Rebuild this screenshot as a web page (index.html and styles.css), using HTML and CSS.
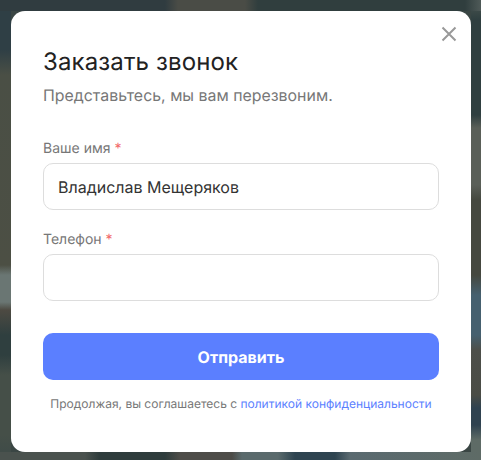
FILE: index.html
```html
<!DOCTYPE html>
<html lang="ru">
<head>
<meta charset="utf-8">
<title>Заказать звонок</title>
<link rel="stylesheet" href="styles.css">
</head>
<body>
<div class="overlay">
  <form class="modal">
    <button type="button" class="close" aria-label="Закрыть">
      <svg width="16" height="16" viewBox="0 0 16 16"><path d="M1.5 1.5L14.5 14.5M14.5 1.5L1.5 14.5" stroke="#999" stroke-width="2" fill="none"/></svg>
    </button>
    <h2 class="title">Заказать звонок</h2>
    <p class="subtitle">Представьтесь, мы вам перезвоним.</p>
    <label class="field">
      <span class="label">Ваше имя <span class="req">*</span></span>
      <input class="input" type="text" value="Владислав Мещеряков">
    </label>
    <label class="field">
      <span class="label">Телефон <span class="req">*</span></span>
      <input class="input" type="tel">
    </label>
    <button type="button" class="submit">Отправить</button>
    <p class="note">Продолжая, вы соглашаетесь с <a href="#">политикой конфиденциальности</a></p>
  </form>
</div>
</body>
</html>
```
FILE: styles.css
```css
* { box-sizing: border-box; }
html, body { margin: 0; height: 100%; }
body { font-family: Inter, "Liberation Sans", sans-serif; text-rendering: geometricPrecision; }
.overlay {
  height: 460px;
  padding: 11px 10px 8px 11px;
  background:
    linear-gradient(90deg, #303c40 0, #303c40 165px, #4a4c46 178px, #4a4c46 245px, #303e3e 258px, #303e3e 465px, #4f5a58 481px) top left / 100% 11px no-repeat,
    linear-gradient(90deg, #4a524e 0, #4a524e 85px, #2e3c3c 100px, #2e3c3c 165px, #4d4c48 180px, #4d4c48 232px, #5a6a6c 242px, #5a6a6c 278px, #2e4450 295px, #2e4450 335px, #5a6a70 350px, #5e6b66 481px) bottom left / 100% 8px no-repeat,
    linear-gradient(180deg, #2f3f45 0, #2f3f45 50px, #4a4f45 75px, #4c4f44 265px, #6a7673 275px, #6a7673 302px, #4d4a42 310px, #2f3f3f 335px, #2f3f3f 355px, #454f48 375px, #454f48 435px, #3d4a48 460px) left / 11px 100% no-repeat,
    linear-gradient(180deg, #4a5550 0, #2f3f40 20px, #2f3f40 115px, #5a5f58 128px, #5a5f58 185px, #45483f 200px, #45483f 275px, #45606f 295px, #45606f 335px, #4d4f4a 350px, #4a4c45 395px, #2f4250 408px, #2f4250 425px, #5e6b66 440px) right / 10px 100% no-repeat,
    #3a4644;
}
.modal {
  position: relative;
  width: 460px;
  height: 441px;
  padding: 36px 32px 0;
  background: #fff;
  border-radius: 14px;
}
.close {
  position: absolute;
  top: 15px;
  right: 14px;
  width: 16px;
  height: 16px;
  padding: 0;
  border: 0;
  background: none;
  line-height: 0;
}
.title { margin: 0; font-size: 24px; line-height: 29px; font-weight: 400; letter-spacing: 0.13px; color: #222; }
.subtitle { margin: 10px 0 33px; font-size: 15.9px; line-height: 20px; color: #777; }
.field { display: block; margin-bottom: 20px; }
.label { display: block; margin-bottom: 5px; font-size: 14px; line-height: 19px; color: #777; }
.req { color: #f26b6b; }
.input {
  display: block;
  width: 100%;
  height: 47px;
  padding: 0 14px;
  border: 1px solid #ddd;
  border-radius: 10px;
  font: 16px Inter, "Liberation Sans", sans-serif;
  color: #333;
  background: #fff;
  text-rendering: geometricPrecision;
}
.submit {
  display: block;
  width: 100%;
  height: 47px;
  margin-top: 32px;
  border: 0;
  border-radius: 10px;
  background: #5b7fff;
  color: #fff;
  font: 700 16px Inter, "Liberation Sans", sans-serif;
  text-rendering: geometricPrecision;
}
.note { margin: 16px 0 0; font-size: 12px; line-height: 16px; color: #777; text-align: center; }
.note a { color: #5b7fff; text-decoration: none; }
```
